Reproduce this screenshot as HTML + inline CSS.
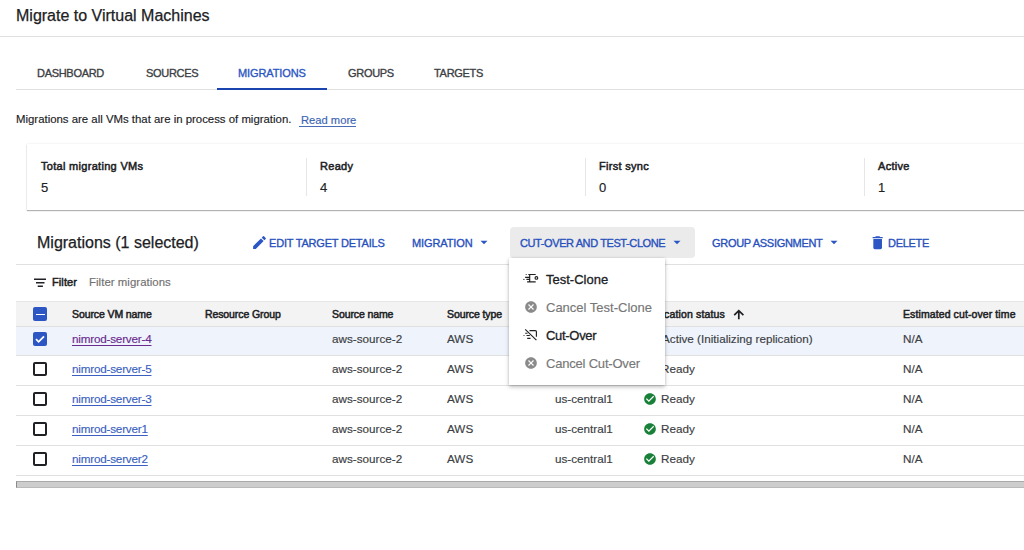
<!DOCTYPE html>
<html><head><meta charset="utf-8">
<style>
*{box-sizing:border-box;margin:0;padding:0}
html,body{width:1024px;height:550px;overflow:hidden;background:#fff;font-family:"Liberation Sans",sans-serif;color:#202124;position:relative}
.a{-webkit-text-stroke-width:0.15px}
.a{position:absolute;white-space:nowrap;line-height:1}
svg{position:absolute;display:block}
.hl{position:absolute;height:1px;background:#e0e0e0}
.tab{top:67.8px;font-size:11px;-webkit-text-stroke-width:0.35px;color:#3c4043;letter-spacing:-0.3px}
.tab.act{color:#2b56c4}
.clab{font-size:11px;-webkit-text-stroke-width:0.5px;top:161px;letter-spacing:0.3px;color:#202124}
.cval{font-size:13px;top:181px;color:#202124;-webkit-text-stroke-width:0.15px}
.vd{position:absolute;width:1px;background:#e6e6e6;top:158px;height:38px}
.tb{font-size:11px;-webkit-text-stroke-width:0.35px;color:#2750bd;top:237.7px;letter-spacing:-0.3px}
.th{font-size:10.5px;-webkit-text-stroke-width:0.5px;top:308.6px;color:#202124;letter-spacing:-0.1px}
.td{font-size:11.7px;color:#3c4043}
.vm{color:#3b5fc0;text-decoration:underline;text-underline-offset:2px;letter-spacing:-0.2px}
.cb{position:absolute;left:33px;width:14px;height:14px;border:2px solid #202124;border-radius:2px}
.mi{font-size:13px;left:546px;color:#202124;-webkit-text-stroke-width:0.3px}
.mi.dis{color:#777;-webkit-text-stroke-width:0.15px}
</style></head><body>
<div class="a" style="left:16px;top:8px;font-size:16px;color:#202124;-webkit-text-stroke-width:0.25px">Migrate to Virtual Machines</div>
<div class="hl" style="left:0;top:36px;width:1024px"></div>

<div class="a tab" style="left:37px">DASHBOARD</div>
<div class="a tab" style="left:146px">SOURCES</div>
<div class="a tab act" style="left:238px;letter-spacing:-0.1px">MIGRATIONS</div>
<div class="a tab" style="left:348px">GROUPS</div>
<div class="a tab" style="left:434px">TARGETS</div>
<div class="hl" style="left:16px;top:89px;width:1008px"></div>
<div style="position:absolute;left:217px;top:88px;width:110px;height:2px;background:#1a45b0"></div>

<div class="a" style="left:16px;top:114px;font-size:11.4px;color:#202124">Migrations are all VMs that are in process of migration.</div>
<div class="a" style="left:301px;top:114.5px;font-size:11.2px;color:#3b64b4">Read more</div>
<div style="position:absolute;left:298.5px;top:126px;width:57.5px;height:1px;background:#4a6cb4"></div>

<div style="position:absolute;left:27px;top:144px;width:1010px;height:66px;background:#fff;box-shadow:0 1px 1px rgba(0,0,0,.28),0 0 2px rgba(0,0,0,.1)"></div>
<div class="a clab" style="left:41px">Total migrating VMs</div>
<div class="a cval" style="left:41px">5</div>
<div class="vd" style="left:306px"></div>
<div class="a clab" style="left:320px">Ready</div>
<div class="a cval" style="left:320px">4</div>
<div class="vd" style="left:585px"></div>
<div class="a clab" style="left:599px">First sync</div>
<div class="a cval" style="left:599px">0</div>
<div class="vd" style="left:864px"></div>
<div class="a clab" style="left:878px">Active</div>
<div class="a cval" style="left:878px">1</div>

<div class="a" style="left:37px;top:235px;font-size:16px;color:#202124;-webkit-text-stroke-width:0.25px">Migrations (1 selected)</div>
<svg style="left:250.5px;top:234.2px" width="17" height="17" viewBox="0 0 24 24"><path fill="#2b56c4" d="M3 17.25V21h3.75L17.81 9.94l-3.75-3.75L3 17.25zM20.71 7.04a.996.996 0 000-1.41l-2.34-2.34a.996.996 0 00-1.41 0l-1.83 1.83 3.75 3.75 1.83-1.83z"/></svg>
<div class="a tb" style="left:269px;letter-spacing:-0.2px">EDIT TARGET DETAILS</div>
<div class="a tb" style="left:412px;letter-spacing:-0.1px">MIGRATION</div>
<svg style="left:480px;top:240px" width="8" height="5" viewBox="0 0 8 5"><path fill="#2b56c4" d="M0.5 0.8h7L4 4.3z"/></svg>
<div style="position:absolute;left:509.5px;top:227px;width:185.5px;height:30.5px;background:#ebebeb;border-radius:4px"></div>
<div class="a tb" style="left:520px;letter-spacing:-0.4px">CUT-OVER AND TEST-CLONE</div>
<svg style="left:672.7px;top:240px" width="8" height="5" viewBox="0 0 8 5"><path fill="#2b56c4" d="M0.5 0.8h7L4 4.3z"/></svg>
<div class="a tb" style="left:712px">GROUP ASSIGNMENT</div>
<svg style="left:830.2px;top:240px" width="8" height="5" viewBox="0 0 8 5"><path fill="#2b56c4" d="M0.5 0.8h7L4 4.3z"/></svg>
<svg style="left:868.7px;top:234.2px" width="17.3" height="17.3" viewBox="0 0 24 24"><path fill="#2b56c4" d="M6 19c0 1.1.9 2 2 2h8c1.1 0 2-.9 2-2V7H6v12zM19 4h-3.5l-1-1h-5l-1 1H5v2h14V4z"/></svg>
<div class="a tb" style="left:888px">DELETE</div>
<div class="hl" style="left:16px;top:264px;width:1008px"></div>

<svg style="left:34px;top:278px" width="13" height="10" viewBox="0 0 13 10"><path fill="#202124" d="M0 0.5h12v1.4H0zM2 4h8.5v1.4H2zM3.7 7.5h5.2v1.4H3.7z"/></svg>
<div class="a" style="left:52px;top:277px;font-size:11px;-webkit-text-stroke-width:0.5px;color:#202124;letter-spacing:0.1px">Filter</div>
<div class="a" style="left:89px;top:277.3px;font-size:11.4px;color:#707070;letter-spacing:0.05px">Filter migrations</div>

<!-- table -->
<div style="position:absolute;left:16px;top:300.5px;width:1008px;height:26.5px;background:#f3f3f3;border-top:1px solid #e6e6e6;border-bottom:1.5px solid #e0e0e0"></div>
<div style="position:absolute;left:16px;top:327px;width:1008px;height:28px;background:#eef3fc"></div>
<div class="hl" style="left:16px;top:355px;width:1008px"></div>
<div class="hl" style="left:16px;top:385px;width:1008px"></div>
<div class="hl" style="left:16px;top:415px;width:1008px"></div>
<div class="hl" style="left:16px;top:445px;width:1008px"></div>
<div class="hl" style="left:16px;top:474.5px;width:1008px"></div>

<div style="position:absolute;left:33px;top:307px;width:14px;height:14px;background:#2b56c4;border-radius:2px"></div>
<div style="position:absolute;left:35.8px;top:313.5px;width:8.8px;height:1.8px;background:#fff"></div>
<div class="a th" style="left:72px">Source VM name</div>
<div class="a th" style="left:205px">Resource Group</div>
<div class="a th" style="left:332px">Source name</div>
<div class="a th" style="left:447px">Source type</div>
<div class="a th" style="left:555px">Region</div>
<div class="a th" style="left:664px;letter-spacing:0.15px">cation status</div>
<svg style="left:730px;top:306px" width="18" height="16" viewBox="0 0 18 16"><path fill="none" stroke="#202124" stroke-width="1.7" d="M8.8 13.2V5M4.2 9.2L8.8 4.6L13.4 9.2"/></svg>
<div class="a th" style="left:903px;letter-spacing:0.1px">Estimated cut-over time</div>

<!-- row1 -->
<div style="position:absolute;left:33px;top:331.5px;width:14px;height:14px;background:#2b56c4;border-radius:2px"></div>
<svg style="left:33px;top:331.5px" width="14" height="14" viewBox="0 0 14 14"><path fill="none" stroke="#fff" stroke-width="1.8" d="M3 7.2l2.6 2.6L11 4.4"/></svg>
<div class="a td vm" style="left:72px;top:332.8px;color:#6a2a8f">nimrod-server-4</div>
<div class="a td" style="left:332px;top:332.8px">aws-source-2</div>
<div class="a td" style="left:447px;top:332.8px">AWS</div>
<div class="a td" style="left:555px;top:332.8px">us-central1</div>
<div class="a td" style="left:662px;top:332.8px">Active (Initializing replication)</div>
<div class="a td" style="left:903px;top:332.8px">N/A</div>

<!-- row2 -->
<div class="cb" style="top:361.5px"></div>
<div class="a td vm" style="left:72px;top:362.8px">nimrod-server-5</div>
<div class="a td" style="left:332px;top:362.8px">aws-source-2</div>
<div class="a td" style="left:447px;top:362.8px">AWS</div>
<div class="a td" style="left:555px;top:362.8px">us-central1</div>
<svg style="left:643px;top:361.5px" width="14" height="14" viewBox="0 0 24 24"><path fill="#188038" d="M12 2C6.48 2 2 6.48 2 12s4.48 10 10 10 10-4.48 10-10S17.52 2 12 2zm-2 15l-5-5 1.41-1.41L10 14.17l7.59-7.59L19 8l-9 9z"/></svg>
<div class="a td" style="left:661px;top:362.8px">Ready</div>
<div class="a td" style="left:903px;top:362.8px">N/A</div>

<!-- row3 -->
<div class="cb" style="top:391.5px"></div>
<div class="a td vm" style="left:72px;top:392.8px">nimrod-server-3</div>
<div class="a td" style="left:332px;top:392.8px">aws-source-2</div>
<div class="a td" style="left:447px;top:392.8px">AWS</div>
<div class="a td" style="left:555px;top:392.8px">us-central1</div>
<svg style="left:643px;top:391.5px" width="14" height="14" viewBox="0 0 24 24"><path fill="#188038" d="M12 2C6.48 2 2 6.48 2 12s4.48 10 10 10 10-4.48 10-10S17.52 2 12 2zm-2 15l-5-5 1.41-1.41L10 14.17l7.59-7.59L19 8l-9 9z"/></svg>
<div class="a td" style="left:661px;top:392.8px">Ready</div>
<div class="a td" style="left:903px;top:392.8px">N/A</div>

<!-- row4 -->
<div class="cb" style="top:421.5px"></div>
<div class="a td vm" style="left:72px;top:422.8px">nimrod-server1</div>
<div class="a td" style="left:332px;top:422.8px">aws-source-2</div>
<div class="a td" style="left:447px;top:422.8px">AWS</div>
<div class="a td" style="left:555px;top:422.8px">us-central1</div>
<svg style="left:643px;top:421.5px" width="14" height="14" viewBox="0 0 24 24"><path fill="#188038" d="M12 2C6.48 2 2 6.48 2 12s4.48 10 10 10 10-4.48 10-10S17.52 2 12 2zm-2 15l-5-5 1.41-1.41L10 14.17l7.59-7.59L19 8l-9 9z"/></svg>
<div class="a td" style="left:661px;top:422.8px">Ready</div>
<div class="a td" style="left:903px;top:422.8px">N/A</div>

<!-- row5 -->
<div class="cb" style="top:451.5px"></div>
<div class="a td vm" style="left:72px;top:452.8px">nimrod-server2</div>
<div class="a td" style="left:332px;top:452.8px">aws-source-2</div>
<div class="a td" style="left:447px;top:452.8px">AWS</div>
<div class="a td" style="left:555px;top:452.8px">us-central1</div>
<svg style="left:643px;top:451.5px" width="14" height="14" viewBox="0 0 24 24"><path fill="#188038" d="M12 2C6.48 2 2 6.48 2 12s4.48 10 10 10 10-4.48 10-10S17.52 2 12 2zm-2 15l-5-5 1.41-1.41L10 14.17l7.59-7.59L19 8l-9 9z"/></svg>
<div class="a td" style="left:661px;top:452.8px">Ready</div>
<div class="a td" style="left:903px;top:452.8px">N/A</div>

<!-- scrollbar -->
<div style="position:absolute;left:16px;top:480.7px;width:1010px;height:7.8px;background:#cdcdcd;border:1px solid #aaa;border-bottom-color:#bababa;border-left-color:#8a8a8a"></div>

<!-- menu -->
<div style="position:absolute;left:509px;top:258px;width:156px;height:127px;background:#fff;box-shadow:0 2px 4px rgba(0,0,0,.25),0 0 2px rgba(0,0,0,.12)"></div>
<svg style="left:520px;top:270px" width="22" height="17" viewBox="0 0 22 17"><g fill="none" stroke="#202124" stroke-width="1.15"><path d="M8.3 4.5H15.7M9.7 4.5V12M5.1 7.4H9.7M6.4 9.4H9.7M7.1 11.9H15.7"/><circle cx="16.4" cy="7.9" r="1.35"/></g><circle cx="6.2" cy="4.5" r=".6" fill="#202124"/><circle cx="3.9" cy="9.4" r=".6" fill="#202124"/></svg>
<div class="a mi" style="top:273px">Test-Clone</div>
<svg style="left:524px;top:299.5px" width="14" height="14" viewBox="0 0 24 24"><path fill="#8a8a8a" d="M12 2C6.47 2 2 6.47 2 12s4.47 10 10 10 10-4.47 10-10S17.53 2 12 2zm5 13.59L15.59 17 12 13.41 8.41 17 7 15.59 10.59 12 7 8.41 8.41 7 12 10.59 15.59 7 17 8.41 13.41 12 17 15.59z"/></svg>
<div class="a mi dis" style="top:301px">Cancel Test-Clone</div>
<svg style="left:520px;top:326px" width="22" height="18" viewBox="0 0 22 18"><g fill="none" stroke="#202124" stroke-width="1.15"><path d="M5.2 3.3L16.4 14.1"/><path d="M9.5 4.6H15.4Q16.4 4.6 16.4 5.6V10.8"/><path d="M5.2 7.2H7.5M6.5 9.5H9.8M7.2 12.3H10.5"/></g><circle cx="4" cy="9.5" r=".6" fill="#202124"/></svg>
<div class="a mi" style="top:329px;letter-spacing:-0.3px">Cut-Over</div>
<svg style="left:524px;top:355.5px" width="14" height="14" viewBox="0 0 24 24"><path fill="#8a8a8a" d="M12 2C6.47 2 2 6.47 2 12s4.47 10 10 10 10-4.47 10-10S17.53 2 12 2zm5 13.59L15.59 17 12 13.41 8.41 17 7 15.59 10.59 12 7 8.41 8.41 7 12 10.59 15.59 7 17 8.41 13.41 12 17 15.59z"/></svg>
<div class="a mi dis" style="top:357px;letter-spacing:-0.2px">Cancel Cut-Over</div>
</body></html>
